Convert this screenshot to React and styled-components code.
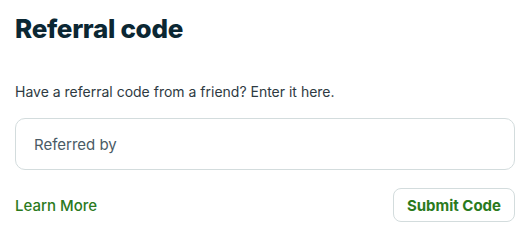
import styled, { createGlobalStyle } from "styled-components"

const GlobalStyle = createGlobalStyle`
  body {
    margin: 0;
    background: #ffffff;
    font-family: Inter, "Noto Sans", sans-serif;
  }
`

const Card = styled.div`
  width: 500px;
  padding: 12px 15px 15px;
  display: flex;
  flex-direction: column;
`

const Title = styled.h2`
  margin: 0;
  font-size: 26px;
  line-height: 34px;
  font-weight: 800;
  color: #0b2733;
  letter-spacing: -0.3px;
`

const Intro = styled.p`
  margin: 36px 0 0;
  font-size: 14px;
  line-height: 20px;
  color: #2e3a42;
`

const CodeInput = styled.input`
  box-sizing: border-box;
  margin-top: 16px;
  width: 100%;
  height: 52px;
  padding: 0 18px;
  border: 1px solid #d3dcdd;
  border-radius: 10px;
  font-family: inherit;
  font-size: 15px;
  color: #22323c;
  outline: none;

  &::placeholder {
    color: #4a5b66;
  }
`

const Footer = styled.div`
  margin-top: 18px;
  display: flex;
  align-items: center;
  justify-content: space-between;
`

const LearnLink = styled.a`
  font-size: 15px;
  font-weight: 500;
  color: #2b7a1d;
  text-decoration: none;
`

const SubmitButton = styled.button`
  box-sizing: border-box;
  height: 34px;
  padding: 0 13px;
  border: 1px solid #d3dcdd;
  border-radius: 8px;
  background: #ffffff;
  font-family: inherit;
  font-size: 15px;
  font-weight: 700;
  color: #2b7a1d;
`

export default function App() {
  return (
    <>
      <GlobalStyle />
      <Card>
        <Title>Referral code</Title>
        <Intro>Have a referral code from a friend? Enter it here.</Intro>
        <CodeInput placeholder="Referred by" />
        <Footer>
          <LearnLink href="#">Learn More</LearnLink>
          <SubmitButton>Submit Code</SubmitButton>
        </Footer>
      </Card>
    </>
  )
}
